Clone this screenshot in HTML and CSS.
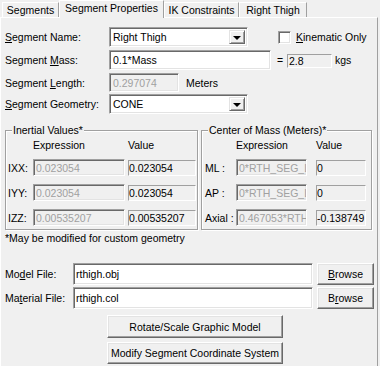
FILE: index.html
```html
<!DOCTYPE html>
<html lang="en">
<head>
    <meta charset="UTF-8">
    <title>Segment Properties</title>
    <link rel="stylesheet" href="styles.css">
</head>
<body>
    <div class="tabs">
        <div class="tab tab-segments">Segments</div>
        <div class="tab tab-props active">Segment Properties</div>
        <div class="tab tab-ik">IK Constraints</div>
        <div class="tab tab-thigh">Right Thigh</div>
    </div>

    <div class="panel">
        <div class="row row-name">
            <label class="field-label"><u>S</u>egment Name:</label>
            <div class="combo">
                <span class="combo-text">Right Thigh</span>
                <span class="combo-btn"><span class="arrow"></span></span>
            </div>
            <label class="check"><span class="check-box"></span><u>K</u>inematic Only</label>
        </div>

        <div class="row row-mass">
            <label class="field-label">Segment <u>M</u>ass:</label>
            <input type="text" class="edit edit-mass" value="0.1*Mass">
            <span class="equals">=</span>
            <span class="static-box kg-box">2.8</span>
            <span class="unit">kgs</span>
        </div>

        <div class="row row-length">
            <label class="field-label">Segment <u>L</u>ength:</label>
            <input type="text" class="edit disabled edit-length" value="0.297074" disabled>
            <span class="unit meters">Meters</span>
        </div>

        <div class="row row-geom">
            <label class="field-label"><u>S</u>egment Geometry:</label>
            <div class="combo">
                <span class="combo-text">CONE</span>
                <span class="combo-btn"><span class="arrow"></span></span>
            </div>
        </div>

        <div class="groups">
            <div class="group group-inertia">
                <span class="group-title">Inertial Values*</span>
                <div class="grid">
                    <span></span><span class="col-head">Expression</span><span class="col-head">Value</span>

                    <span class="row-label">IXX:</span>
                    <input type="text" class="edit disabled" value="0.023054" disabled>
                    <span class="static-box">0.023054</span>

                    <span class="row-label">IYY:</span>
                    <input type="text" class="edit disabled" value="0.023054" disabled>
                    <span class="static-box">0.023054</span>

                    <span class="row-label">IZZ:</span>
                    <input type="text" class="edit disabled" value="0.00535207" disabled>
                    <span class="static-box">0.00535207</span>
                </div>
            </div>

            <div class="group group-com">
                <span class="group-title">Center of Mass (Meters)*</span>
                <div class="grid">
                    <span></span><span class="col-head">Expression</span><span class="col-head">Value</span>

                    <span class="row-label">ML :</span>
                    <input type="text" class="edit disabled" value="0*RTH_SEG_LENGTH" disabled>
                    <span class="static-box">0</span>

                    <span class="row-label">AP :</span>
                    <input type="text" class="edit disabled" value="0*RTH_SEG_LENGTH" disabled>
                    <span class="static-box">0</span>

                    <span class="row-label">Axial :</span>
                    <input type="text" class="edit disabled" value="0.467053*RTH_SEG_LENGTH" disabled>
                    <span class="static-box">-0.138749</span>
                </div>
            </div>
        </div>

        <div class="note">*May be modified for custom geometry</div>

        <div class="row file-row">
            <label class="file-label">Mo<u>d</u>el File:</label>
            <input type="text" class="edit file-edit" value="rthigh.obj">
            <button class="button browse"><u>B</u>rowse</button>
        </div>
        <div class="row file-row second">
            <label class="file-label">Ma<u>t</u>erial File:</label>
            <input type="text" class="edit file-edit" value="rthigh.col">
            <button class="button browse">B<u>r</u>owse</button>
        </div>

        <button class="button wide first">Rotate/Scale Graphic Model</button>
        <button class="button wide">Modify Segment Coordinate System</button>
    </div>
</body>
</html>
```

FILE: styles.css
```css
body {
    margin: 0;
    width: 380px;
    height: 366px;
    overflow: hidden;
    background-color: #f0f0f0;
    font-family: "Liberation Sans", Arial, sans-serif;
    font-size: 10.5px;
    color: #000;
}
u {
    text-decoration: underline;
    text-underline-offset: 1px;
}

/* tab strip */
.tabs {
    display: flex;
    align-items: flex-end;
    height: 17px;
    padding-left: 2px;
}
.tab {
    box-sizing: border-box;
    height: 15px;
    line-height: 14px;
    text-align: center;
    border-top: 1px solid #fff;
    border-left: 1px solid #fff;
    border-right: 1px solid #a0a0a0;
    background-color: #f0f0f0;
}
.tab-segments { width: 57px; }
.tab-props { width: 105px; }
.tab-ik { width: 75px; }
.tab-thigh { width: 68px; }
.tab.active {
    height: 18px;
    line-height: 15px;
    margin-bottom: -1px;
    position: relative;
    z-index: 1;
}

.panel {
    box-sizing: border-box;
    width: 378px;
    height: 349px;
    border-top: 1px solid #fff;
    border-left: 1px solid #fff;
    border-right: 1px solid #a0a0a0;
    padding-top: 9px;
}

/* form rows */
.row {
    display: flex;
    align-items: center;
    height: 20px;
}
.row-mass { margin-top: 3px; }
.row-length { margin-top: 3px; height: 19px; }
.row-geom { margin-top: 2px; }
.field-label {
    width: 104px;
    margin-left: 4px;
}

.edit {
    box-sizing: border-box;
    height: 100%;
    margin: 0;
    padding: 0 0 0 3px;
    font: inherit;
    color: #000;
    background-color: #fff;
    border: 1px solid;
    border-color: #a0a0a0 #fff #fff #a0a0a0;
    box-shadow: inset 1px 1px 0 #696969, inset -1px -1px 0 #e3e3e3;
    outline: none;
}
.edit.disabled {
    background-color: #f0f0f0;
    color: #a0a0a0;
    -webkit-text-fill-color: #a0a0a0;
}
.edit-mass { width: 162px; }
.edit-length { width: 70px; }

.combo {
    box-sizing: border-box;
    display: flex;
    align-items: center;
    width: 139px;
    height: 100%;
    background-color: #fff;
    border: 1px solid;
    border-color: #a0a0a0 #fff #fff #a0a0a0;
    box-shadow: inset 1px 1px 0 #696969, inset -1px -1px 0 #e3e3e3;
    padding: 2px 2px 2px 2px;
}
.combo-text {
    flex: 1;
    padding-left: 1px;
}
.combo-btn {
    box-sizing: border-box;
    display: flex;
    align-items: center;
    justify-content: center;
    width: 16px;
    height: 100%;
    background-color: #f0f0f0;
    border: 1px solid;
    border-color: #e3e3e3 #696969 #696969 #e3e3e3;
    box-shadow: inset 1px 1px 0 #fff, inset -1px -1px 0 #a0a0a0;
}
.arrow {
    width: 0;
    height: 0;
    border-left: 4px solid transparent;
    border-right: 4px solid transparent;
    border-top: 4px solid #000;
    margin-top: 1px;
}

.check {
    display: flex;
    align-items: center;
    margin-left: 30px;
}
.check-box {
    box-sizing: border-box;
    width: 13px;
    height: 13px;
    margin-right: 5px;
    background-color: #fff;
    border: 1px solid;
    border-color: #a0a0a0 #fff #fff #a0a0a0;
    box-shadow: inset 1px 1px 0 #696969, inset -1px -1px 0 #e3e3e3;
}

.equals { margin-left: 6px; width: 6px; }
.static-box {
    box-sizing: border-box;
    display: block;
    height: 100%;
    line-height: 13px;
    padding-left: 1px;
    white-space: nowrap;
    overflow: hidden;
    border: 1px solid;
    border-color: #a0a0a0 #fff #fff #a0a0a0;
}
.kg-box {
    width: 45px;
    height: 14px;
    margin-left: 4px;
    margin-top: 1px;
}
.unit { margin-left: 3px; }
.meters { margin-left: 7px; }

/* group boxes */
.groups {
    display: flex;
    gap: 3px;
    margin: 16px 0 0 4px;
}
.group {
    box-sizing: border-box;
    height: 100px;
    border: 1px solid #a0a0a0;
    box-shadow: inset 1px 1px 0 #fff, 1px 1px 0 #fff;
}
.group-inertia { width: 193px; }
.group-com { width: 171px; }
.group-title {
    display: table;
    margin: -7px 0 0 6px;
    padding: 0 1px;
    line-height: 12px;
    background-color: #f0f0f0;
}
.grid {
    display: grid;
    grid-auto-rows: 17px;
    row-gap: 8px;
    align-items: center;
    margin-top: 3px;
}
.grid .col-head {
    align-self: start;
    line-height: 12px;
}
.grid > :nth-child(-n+3) {
    margin-bottom: -2px;
}
.group-inertia .grid {
    grid-template-columns: 25px 95px 68px;
    grid-template-rows: 12px;
    padding-left: 2px;
    row-gap: 6px 8px;
}
.group-com .grid {
    grid-template-columns: 31px 80px 50px;
    grid-template-rows: 12px;
    padding-left: 3px;
}
.grid .edit {
    height: 17px;
    padding-left: 2px;
}
.group-inertia .grid .edit { width: 92px; }
.group-com .grid .edit { width: 71px; }
.grid .static-box {
    height: 16px;
    line-height: 14px;
    padding-left: 0;
}
.grid > :nth-child(n+4) {
    margin-top: 0;
}

.note {
    margin: 2px 0 0 4px;
    line-height: 12px;
}

/* file rows */
.file-row {
    height: 22px;
    margin-top: 19px;
}
.file-row.second { margin-top: 2px; }
.file-label {
    width: 68px;
    margin-left: 4px;
}
.file-edit {
    width: 240px;
    padding-left: 2px;
}

.button {
    box-sizing: border-box;
    margin: 0;
    padding: 0;
    font: inherit;
    color: #000;
    background-color: #f0f0f0;
    border: 1px solid;
    border-color: #fff #696969 #696969 #fff;
    box-shadow: inset -1px -1px 0 #a0a0a0, inset 1px 1px 0 #e3e3e3;
    cursor: pointer;
}
.browse {
    width: 57px;
    height: 100%;
    margin-left: 4px;
}
.wide {
    display: block;
    width: 176px;
    height: 22px;
    margin: 4px 0 0 106px;
}
.wide.first {
    height: 23px;
    margin-top: 6px;
}
```
